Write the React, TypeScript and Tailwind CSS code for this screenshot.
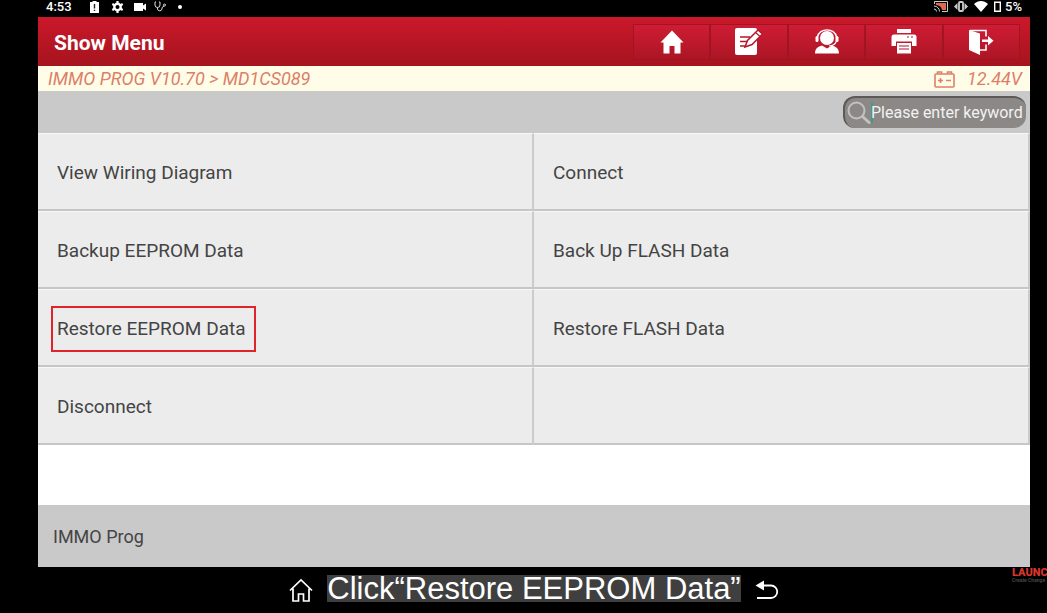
import React from "react";

const menuItems = [
  "View Wiring Diagram",
  "Connect",
  "Backup EEPROM Data",
  "Back Up FLASH Data",
  "Restore EEPROM Data",
  "Restore FLASH Data",
  "Disconnect",
  "",
];
const highlighted = "Restore EEPROM Data";

function HomeIcon() {
  return (
    <svg width="24" height="24" viewBox="0 0 24 24" fill="#fff" aria-hidden="true">
      <path d="M12 0.500 L23.500 12.500 H20.500 V23.500 H14.500 V16 H9.500 V23.500 H3.500 V12.500 H0.500 Z" />
    </svg>
  );
}

function NotesIcon() {
  return (
    <svg width="28" height="27" viewBox="0 0 28 27" aria-hidden="true">
      <path fill="#fff" d="M2 0H20a2 2 0 0 1 2 2V25a2 2 0 0 1-2 2H2a2 2 0 0 1-2-2V2a2 2 0 0 1 2-2Z" />
      <path stroke="#b5162a" strokeWidth="1.600" d="M5 9H15M5 13.500H12M5 18H11" />
      <path fill="#fff" stroke="#b5162a" strokeWidth="1.500" d="M10 19L12.500 12.500L23 2L27.500 6L17 16.500Z" />
      <path stroke="#b5162a" strokeWidth="1.200" d="M20.500 4.500L25 8.500" />
    </svg>
  );
}

function SupportIcon() {
  return (
    <svg width="26" height="25" viewBox="0 0 26 25" aria-hidden="true">
      <circle cx="13" cy="9" r="7" fill="#fff" />
      <path fill="none" stroke="#fff" strokeWidth="1.400" d="M3.500 8C5 -1.500 21 -1.500 22.500 8" />
      <rect x="1.500" y="7" width="3" height="6" rx="1.500" fill="#fff" />
      <rect x="21.500" y="7" width="3" height="6" rx="1.500" fill="#fff" />
      <path fill="none" stroke="#fff" strokeWidth="1.200" d="M22.500 12C21 16 18 17 15 17" />
      <path fill="#fff" d="M1 24.500C1 19.500 4 17.500 8 16.500L13 19.500L18 16.500C22 17.500 25 19.500 25 24.500Z" />
    </svg>
  );
}

function PrintIcon() {
  return (
    <svg width="26" height="25" viewBox="0 0 26 25" aria-hidden="true">
      <path fill="#fff" d="M6 0H20V4H6ZM3 5.500H23a2.500 2.500 0 0 1 2.500 2.500V17H21V12.500H5V17H0.500V8A2.500 2.500 0 0 1 3 5.500Z" />
      <path fill="#fff" d="M6 14H20V24.500H6Z" />
      <path stroke="#b5162a" strokeWidth="1.200" d="M8 17H18M8 20H18M16 8H18M20 8H22" />
    </svg>
  );
}

function ExitIcon() {
  return (
    <svg width="26" height="26" viewBox="0 0 26 26" aria-hidden="true">
      <path fill="#fff" d="M1 1L12 4.500V26L1 21Z" />
      <path fill="none" stroke="#fff" strokeWidth="1.600" d="M2 1.500H18V7.500M18 15.500V21H12" />
      <path fill="#fff" d="M14 10.500H20V7L25.500 11.800L20 16.500V13H14Z" />
    </svg>
  );
}

const tools = [
  { label: "Home", icon: <HomeIcon /> },
  { label: "Notes", icon: <NotesIcon /> },
  { label: "Support", icon: <SupportIcon /> },
  { label: "Print", icon: <PrintIcon /> },
  { label: "Exit", icon: <ExitIcon /> },
];

function StatusBar() {
  return (
    <div className="flex h-[17px] items-start justify-between pr-2 pl-2 text-[13px] leading-[13px] font-medium text-white">
      <div className="flex items-center gap-2">
        <span className="w-9">4:53</span>
        <svg width="9" height="12" viewBox="0 0 9 12" aria-hidden="true">
          <path fill="#fff" d="M2.500 0H6.500V1H9V12H0V1H2.500Z" />
          <path stroke="#222" strokeWidth="1.400" d="M4.500 3V7.500M4.500 8.700V10" />
        </svg>
        <svg className="ml-1" width="13" height="12" viewBox="0 0 12 12" aria-hidden="true">
          <circle cx="6" cy="6" r="3.200" fill="none" stroke="#fff" strokeWidth="2.400" />
          <path
            stroke="#fff"
            strokeWidth="2.200"
            d="M6 0V2.500M6 9.500V12M0.800 3L3 4.200M9 7.800L11.200 9M0.800 9L3 7.800M9 4.200L11.200 3"
          />
        </svg>
        <svg className="ml-0.5" width="12" height="8" viewBox="0 0 12 8" fill="#fff" aria-hidden="true">
          <path d="M0 0H9V2.500L12 0.500V7.500L9 5.500V8H0Z" />
        </svg>
        <svg width="12" height="11" viewBox="0 0 12 11" fill="none" stroke="#ddd" aria-hidden="true">
          <path d="M2 1H1V4A2.500 2.500 0 0 0 6 4V1H5M3.500 6.500V8A2.300 2.300 0 0 0 8 8V6.500L10 5" />
          <circle cx="10.500" cy="4" r="1" />
        </svg>
        <span className="ml-1 size-1 rounded-full bg-white" />
      </div>
      <div className="flex items-center gap-1.5">
        <svg width="14" height="11" viewBox="0 0 14 11" fill="none" aria-hidden="true">
          <path stroke="#ccc" d="M0.500 3V0.500H13.500V10.500H8" />
          <path fill="#d96a4e" d="M2 2H12V9H8C7.500 6 5.500 4.500 2 4Z" />
          <path stroke="#ccc" d="M0 5A5.500 5.500 0 0 1 5.500 10.500M0 8A2.500 2.500 0 0 1 2.500 10.500" />
        </svg>
        <svg width="14" height="11" viewBox="0 0 14 11" fill="none" aria-hidden="true">
          <rect x="5" y="1" width="4" height="9" rx="1" stroke="#ccc" strokeWidth="1.800" />
          <path fill="#ccc" d="M3.500 2V9L0 5.500ZM10.500 2V9L14 5.500Z" />
        </svg>
        <svg width="14" height="11" viewBox="0 0 14 11" fill="#fff" aria-hidden="true">
          <path d="M0 3C4 -1 10 -1 14 3L7 11Z" />
        </svg>
        <svg width="7" height="11" viewBox="0 0 7 11" fill="none" aria-hidden="true">
          <path stroke="#fff" strokeWidth="1.400" d="M0.700 1.200H6.300V10.300H0.700Z" />
        </svg>
        <span className="-ml-0.5">5%</span>
      </div>
    </div>
  );
}

export default function App() {
  return (
    <div className="flex min-h-screen flex-col overflow-hidden bg-black pr-[17px] pl-[38px] font-['Roboto',sans-serif]">
      <StatusBar />
      <main className="flex flex-1 flex-col bg-white">
        <header className="flex h-[49px] items-center justify-between bg-linear-to-b from-[#cb182b] to-[#a5141e] pr-2.5 pl-4">
          <h1 className="pt-0.5 text-[21px] leading-7 font-bold text-white">Show Menu</h1>
          <nav className="flex h-9 w-[387px] divide-x-2 divide-[#a11424] border border-[#a11424] bg-linear-to-b from-[#cf1c35] to-[#ac1624]">
            {tools.map((tool) => (
              <button
                key={tool.label}
                type="button"
                aria-label={tool.label}
                className="flex flex-1 items-center justify-center"
              >
                {tool.icon}
              </button>
            ))}
          </nav>
        </header>

        <div className="flex h-[25px] items-center justify-between bg-[#fffde8] pt-px pr-2 pl-2.5 text-lg leading-6 text-[#dd7f69] italic">
          <span>IMMO PROG V10.70 &gt; MD1CS089</span>
          <span className="flex items-center gap-3">
            <svg width="21" height="17" viewBox="0 0 21 17" fill="none" stroke="#dd7f69" strokeWidth="1.600" aria-hidden="true">
              <rect x="1" y="3" width="19" height="13" rx="1" />
              <path d="M3.500 3V1H7.500V3M13.500 3V1H17.500V3M4 9.500H9M6.500 7V12M12 9.500H17" />
            </svg>
            12.44V
          </span>
        </div>

        <div className="flex h-[42px] items-center justify-end bg-[#c9c9c9] pr-1">
          <label className="flex h-8 w-[183px] items-center rounded-xl border-t-2 border-l-2 border-[#5c5a59] bg-[#8b8886] pl-0.5">
            <svg className="shrink-0" width="24" height="24" viewBox="0 0 24 24" fill="none" stroke="#c4c2c0" aria-hidden="true">
              <circle cx="9.500" cy="9.500" r="8" strokeWidth="2" />
              <path strokeWidth="3" strokeLinecap="round" d="M15.500 15.500L22 21.500" />
            </svg>
            <span className="-mr-0.5 h-5 w-0.5 shrink-0 bg-[#3f9a8c]" />
            <input
              type="text"
              aria-label="Search keyword"
              placeholder="Please enter keyword"
              className="w-full min-w-0 bg-transparent text-base text-white outline-none placeholder:text-[#f2f2f2]"
            />
          </label>
        </div>

        <div className="grid grid-cols-2">
          {menuItems.map((item, i) => {
            const cell =
              "flex h-[78px] items-center border-t border-r-2 border-b-2 border-t-[#f8f8f8] border-r-[#cbcbcb] border-b-[#c6c6c6] bg-[#ececec] pt-0.5 text-left text-[19px] leading-7 text-[#444]";
            return item ? (
              <button key={i} type="button" className={`${cell} pl-[13px]`}>
                <span
                  className={
                    item === highlighted
                      ? "border-2 border-[#e0242c] py-[7px] pr-2 pl-1"
                      : "border-2 border-transparent py-[7px] pr-2 pl-1"
                  }
                >
                  {item}
                </span>
              </button>
            ) : (
              <div key={i} className={cell} />
            );
          })}
        </div>

        <div className="flex-1" />
        <footer className="flex h-[62px] items-center bg-[#c9c9c9] pt-0.5 pl-[15px] text-lg text-[#444]">
          IMMO Prog
        </footer>
      </main>

      <div className="relative flex h-[46px] items-center justify-center gap-3.5 text-white">
        <button type="button" aria-label="Home screen">
          <svg width="24" height="24" viewBox="0 0 24 24" fill="none" stroke="#fff" strokeWidth="1.700" aria-hidden="true">
            <path d="M1 12.500L12 2L23 12.500M4 10.500V23H9.500V16H14.500V23H20V10.500" />
          </svg>
        </button>
        <p className="mb-1 bg-[#3f3f3f] font-['Liberation_Sans',sans-serif] text-[31px] leading-[27px]">
          Click“Restore EEPROM Data”
        </p>
        <button type="button" aria-label="Back">
          <svg width="24" height="20" viewBox="0 0 24 20" fill="none" stroke="#fff" strokeWidth="1.800" aria-hidden="true">
            <path d="M7 5.500H16A6 6 0 0 1 16 18H2" />
            <path fill="#fff" stroke="none" d="M0.500 5.500L9 0.500V10.500Z" />
          </svg>
        </button>
        <div className="absolute top-0 left-full -ml-[18px] font-bold">
          <p className="text-[11px] leading-[11px] font-black text-[#d8362b]">LAUNCH</p>
          <p className="text-[5px] leading-[5px] whitespace-nowrap text-[#444]">Create Change</p>
        </div>
      </div>
    </div>
  );
}
